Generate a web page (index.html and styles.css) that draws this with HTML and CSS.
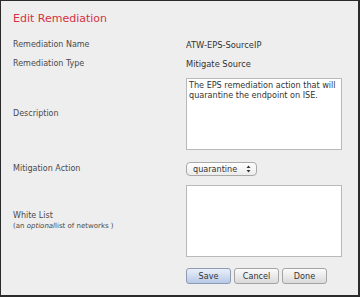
FILE: index.html
```html
<!DOCTYPE html>
<html>
<head>
    <meta charset="UTF-8">
    <title>Edit Remediation</title>
    <link rel="stylesheet" href="styles.css">
</head>
<body>
    <div class="dialog">
        <h1 class="title">Edit Remediation</h1>

        <div class="form">
            <div class="label row-name">Remediation Name</div>
            <div class="value">ATW-EPS-SourceIP</div>

            <div class="label">Remediation Type</div>
            <div class="value">Mitigate Source</div>

            <div class="label">Description</div>
            <div class="value">
                <textarea class="box" id="description">The EPS remediation action that will quarantine the endpoint on ISE.</textarea>
            </div>

            <div class="label">Mitigation Action</div>
            <div class="value">
                <div class="select">
                    <span>quarantine</span>
                    <svg class="arrows" width="5" height="8" viewBox="0 0 5 8">
                        <path d="M2.5 0.5 L4.5 3 L0.5 3 Z" fill="#333"/>
                        <path d="M2.5 7.5 L4.5 5 L0.5 5 Z" fill="#333"/>
                    </svg>
                </div>
            </div>

            <div class="label">
                White List
                <div class="hint">(an <i>optional</i>list of networks )</div>
            </div>
            <div class="value">
                <textarea class="box" id="whitelist"></textarea>
            </div>

            <div></div>
            <div class="value buttons">
                <button class="btn btn-save">Save</button>
                <button class="btn">Cancel</button>
                <button class="btn">Done</button>
            </div>
        </div>
    </div>
</body>
</html>
```
FILE: styles.css
```css
    body {
        margin: 0;
        font-family: "DejaVu Sans", Verdana, sans-serif;
        background-color: #2b2b2b;
    }

    .dialog {
        width: 360px;
        height: 297px;
        box-sizing: border-box;
        background-color: #eeeeee;
        border-top: 1px solid #2b2b2b;
        border-left: 1px solid #2b2b2b;
        border-right: 2px solid #2b2b2b;
        border-bottom: 2px solid #2b2b2b;
        padding: 11px 0 0 12px;
    }

    .title {
        margin: 0 0 10px 0;
        font-size: 11px;
        line-height: 13px;
        font-weight: normal;
        color: #d6323f;
    }

    .form {
        display: grid;
        grid-template-columns: 173px 156px;
        grid-template-rows: 19px 20px 80px 29px 76px 34px;
        align-items: center;
    }

    .label {
        font-size: 8px;
        line-height: 10px;
        color: #4a4a4a;
    }

    .value {
        font-size: 8.3px;
        line-height: 10px;
        color: #333;
        display: flex;
        align-items: center;
    }

    .hint {
        font-size: 7px;
        line-height: 9px;
        margin-top: 1px;
    }

    .box {
        width: 156px;
        height: 72px;
        box-sizing: border-box;
        margin: 0;
        padding: 1px 2px;
        border: 1px solid #b9b9b9;
        background-color: #fff;
        font-family: "DejaVu Sans", Verdana, sans-serif;
        font-size: 8.1px;
        line-height: 10px;
        color: #333;
        resize: none;
        overflow: hidden;
        outline: none;
    }

    .select {
        width: 71px;
        height: 14px;
        box-sizing: border-box;
        border: 1px solid #a9a9a9;
        border-radius: 4px;
        background: linear-gradient(#ffffff, #ececec);
        display: flex;
        align-items: center;
        justify-content: space-between;
        padding: 0 5px 0 6px;
        font-size: 8.1px;
        color: #333;
    }

    .buttons {
        gap: 3px;
    }

    .btn {
        height: 16px;
        box-sizing: border-box;
        margin: 0;
        padding: 0;
        border: 1px solid #a4a4a4;
        border-radius: 3px;
        background: linear-gradient(#fbfbfb, #dadada);
        font-family: "DejaVu Sans", Verdana, sans-serif;
        font-size: 8.1px;
        color: #333;
        width: 45px;
    }

    .btn-save {
        border-color: #8e9bb3;
        background: linear-gradient(#eaf0fa, #b7c9e7);
    }
```
